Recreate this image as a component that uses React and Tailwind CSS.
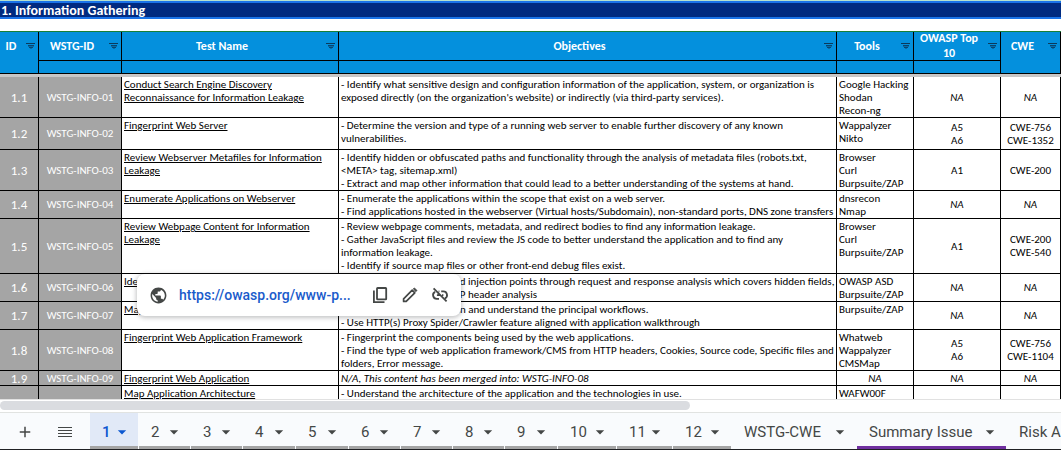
import { MdPublic, MdAdd, MdArrowDropDown } from "react-icons/md";

const columns = [
  { name: "ID", width: "w-[39px]", merged: true },
  { name: "WSTG-ID", width: "w-[83px]" },
  { name: "Test Name", width: "w-[217px]" },
  { name: "Objectives", width: "w-auto" },
  { name: "Tools", width: "w-[77px]" },
  { name: "OWASP Top 10", width: "w-[87px]" },
  { name: "CWE", width: "w-[60px]", merged: true },
];

const rows = [
  { id: "1.1", code: "WSTG-INFO-01", h: "h-[41px]", test: "Conduct Search Engine Discovery Reconnaissance for Information Leakage", goals: ["- Identify what sensitive design and configuration information of the application, system, or organization is", "exposed directly (on the organization's website) or indirectly (via third-party services)."], tools: ["Google Hacking", "Shodan", "Recon-ng"], top: ["NA"], cwe: ["NA"] },
  { id: "1.2", code: "WSTG-INFO-02", h: "h-8", test: "Fingerprint Web Server", goals: ["- Determine the version and type of a running web server to enable further discovery of any known", "vulnerabilities."], tools: ["Wappalyzer", "Nikto"], top: ["A5", "A6"], cwe: ["CWE-756", "CWE-1352"] },
  { id: "1.3", code: "WSTG-INFO-03", h: "h-[41px]", test: "Review Webserver Metafiles for Information Leakage", goals: ["- Identify hidden or obfuscated paths and functionality through the analysis of metadata files (robots.txt,", "<META> tag, sitemap.xml)", "- Extract and map other information that could lead to a better understanding of the systems at hand."], tools: ["Browser", "Curl", "Burpsuite/ZAP"], top: ["A1"], cwe: ["CWE-200"] },
  { id: "1.4", code: "WSTG-INFO-04", h: "h-7", test: "Enumerate Applications on Webserver", goals: ["- Enumerate the applications within the scope that exist on a web server.", "- Find applications hosted in the webserver (Virtual hosts/Subdomain), non-standard ports, DNS zone transfers"], tools: ["dnsrecon", "Nmap"], top: ["NA"], cwe: ["NA"] },
  { id: "1.5", code: "WSTG-INFO-05", h: "h-[55px]", test: "Review Webpage Content for Information Leakage", goals: ["- Review webpage comments, metadata, and redirect bodies to find any information leakage.", "- Gather JavaScript files and review the JS code to better understand the application and to find any", "information leakage.", "- Identify if source map files or other front-end debug files exist."], tools: ["Browser", "Curl", "Burpsuite/ZAP"], top: ["A1"], cwe: ["CWE-200", "CWE-540"] },
  { id: "1.6", code: "WSTG-INFO-06", h: "h-7", test: "Identify Application Entry Points", goals: ["- Identify possible entry and injection points through request and response analysis which covers hidden fields,", "parameters, methods, HTTP header analysis"], tools: ["OWASP ASD", "Burpsuite/ZAP"], top: ["NA"], cwe: ["NA"] },
  { id: "1.7", code: "WSTG-INFO-07", h: "h-7", test: "Map Execution Paths", goals: ["- Map the target application and understand the principal workflows.", "- Use HTTP(s) Proxy Spider/Crawler feature aligned with application walkthrough"], tools: ["Burpsuite/ZAP"], top: ["NA"], cwe: ["NA"] },
  { id: "1.8", code: "WSTG-INFO-08", h: "h-[41px]", test: "Fingerprint Web Application Framework", goals: ["- Fingerprint the components being used by the web applications.", "- Find the type of web application framework/CMS from HTTP headers, Cookies, Source code, Specific files and", "folders, Error message."], tools: ["Whatweb", "Wappalyzer", "CMSMap"], top: ["A5", "A6"], cwe: ["CWE-756", "CWE-1104"] },
  { id: "1.9", code: "WSTG-INFO-09", h: "h-[15px]", test: "Fingerprint Web Application", goals: ["N/A, This content has been merged into: WSTG-INFO-08"], italicGoals: true, tools: ["NA"], top: ["NA"], cwe: ["NA"] },
  { id: "", code: "", h: "h-[41px]", test: "Map Application Architecture", goals: ["- Understand the architecture of the application and the technologies in use."], tools: ["WAFW00F"], top: [], cwe: [] },
];

const tabs = [
  { name: "1", width: "w-[48px]", line: "border-[#a5a5a5]" },
  { name: "2", width: "w-[51px]", line: "border-[#a5a5a5]" },
  { name: "3", width: "w-[51px]", line: "border-[#a5a5a5]" },
  { name: "4", width: "w-[52px]", line: "border-[#a5a5a5]" },
  { name: "5", width: "w-[52px]", line: "border-[#a5a5a5]" },
  { name: "6", width: "w-[51px]", line: "border-[#a5a5a5]" },
  { name: "7", width: "w-[51px]", line: "border-[#a5a5a5]" },
  { name: "8", width: "w-[51px]", line: "border-[#a5a5a5]" },
  { name: "9", width: "w-[52px]", line: "border-[#a5a5a5]" },
  { name: "10", width: "w-[58px]", line: "border-[#a5a5a5]" },
  { name: "11", width: "w-[55px]", line: "border-[#a5a5a5]" },
  { name: "12", width: "w-[58px]", line: "border-[#a5a5a5]" },
  { name: "WSTG-CWE", width: "w-[124px]", line: "border-transparent" },
  { name: "Summary Issue", width: "w-[149px]", line: "border-[#7030a0]" },
  { name: "Risk Assessment", width: "w-[170px]", line: "border-transparent" },
];

function FilterIcon() {
  return (
    <svg className="h-[7px] w-[9px]" viewBox="0 0 9 7" fill="#0b3a5c" aria-hidden="true">
      <path d="M0 0h9v1H0z" />
      <path d="M2 2h6v1H2zM3 4h4v1H3z" fillOpacity="0.85" />
      <path d="M2 3h6v1H2zM4 5h2v1H4z" fillOpacity="0.4" />
    </svg>
  );
}

function CopyIcon() {
  return (
    <svg className="size-[18px]" viewBox="0 0 18 18" fill="none" stroke="currentColor" strokeWidth="1.8" aria-hidden="true">
      <rect x="6" y="2" width="9.2" height="11.4" rx="0.6" />
      <path d="M2.9 4.6v11.6h10.6" />
    </svg>
  );
}

function EditIcon() {
  return (
    <svg className="size-[18px]" viewBox="0 0 18 18" fill="none" stroke="currentColor" strokeWidth="1.7" strokeLinejoin="round" aria-hidden="true">
      <path d="M2.6 15.4v-2.6L11.2 4.2l2.6 2.6-8.6 8.6z" />
      <path d="M12.4 3l1-1 2.6 2.6-1 1z" fill="currentColor" strokeWidth="1" />
    </svg>
  );
}

function UnlinkIcon() {
  return (
    <svg className="size-[18px]" viewBox="0 0 18 18" fill="none" stroke="currentColor" strokeWidth="1.8" aria-hidden="true">
      <path d="M8 12.9H5.8a3.7 3.7 0 0 1-1.7-7M8.4 5.4H7.6M10.2 5.4h2a3.7 3.7 0 0 1 1.8 7M5.9 9.2h3M11 9.2h1.4M2.6 2.4l13 13" />
    </svg>
  );
}

function SheetsIcon() {
  return (
    <svg className="h-[10px] w-[14px]" viewBox="0 0 14 10" fill="currentColor" aria-hidden="true">
      <path d="M0 0h14v1H0zM0 3h14v1H0zM0 6h14v1H0zM0 9h14v1H0z" />
    </svg>
  );
}

function Lines({ items }) {
  return items.map((line) => (
    <div key={line} className={line === "NA" ? "text-center italic" : ""}>{line}</div>
  ));
}

function HeaderCell({ column }) {
  return (
    <th rowSpan={column.merged ? 2 : 1} className="h-[29px] border-r border-b border-black p-0 align-top">
      <div className="flex h-7 items-center">
        <span className="flex-1 pr-1 text-center">{column.name}</span>
        <button aria-label={`Filter ${column.name}`} className="mr-[3px] shrink-0"><FilterIcon /></button>
      </div>
    </th>
  );
}

function Row({ row }) {
  const cell = "border-r border-b border-black py-0";
  return (
    <tr className={row.h}>
      <td className={`${cell} bg-[#a5a5a5] px-0 text-center text-[13px] text-white`}>{row.id}</td>
      <td className={`${cell} bg-[#a5a5a5] px-0 text-center text-white`}>{row.code}</td>
      <td className={`${cell} px-[2px] pt-px align-top`}>
        <a href="https://owasp.org/" className="underline">{row.test}</a>
      </td>
      <td className={`${cell} px-[2px] pt-px align-top whitespace-nowrap ${row.italicGoals ? "italic" : ""}`}><Lines items={row.goals} /></td>
      <td className={`${cell} px-[2px] pt-px align-top whitespace-nowrap`}><Lines items={row.tools} /></td>
      <td className={`${cell} px-0 text-center`}><Lines items={row.top} /></td>
      <td className={`${cell} px-0 text-center`}><Lines items={row.cwe} /></td>
    </tr>
  );
}

function LinkCard() {
  return (
    <div className="absolute top-[274px] left-[137px] flex h-[42px] w-[324px] items-center rounded-lg bg-white pl-3 text-[#444746] shadow-[0_1px_4px_1px_rgba(60,64,67,0.3)]">
      <MdPublic size={19} />
      <a href="https://owasp.org/" className="ml-[11px] w-[184px] font-[Roboto,sans-serif] text-[14px] font-medium text-[#1a5bcb]">https://owasp.org/www-p...</a>
      <div className="ml-2 flex gap-3">
        <button aria-label="Copy link"><CopyIcon /></button>
        <button aria-label="Edit link"><EditIcon /></button>
        <button aria-label="Remove link"><UnlinkIcon /></button>
      </div>
    </div>
  );
}

export default function App() {
  return (
    <div className="relative flex h-screen flex-col overflow-hidden bg-white">
      <main className="min-h-0 flex-1 overflow-hidden font-[Carlito,Calibri,Lato,sans-serif] text-[11px] leading-[13px] text-black">
        <h1 className="h-[19px] overflow-hidden border-t border-[#b7e1cd]">
          <span className="flex h-[18px] items-center border-y-2 border-[#1a73e8] bg-[#002a80] pl-px text-[14px] font-bold text-white">1. Information Gathering</span>
        </h1>
        <table className="mt-3 w-full table-fixed border-separate border-spacing-0">
          <colgroup>{columns.map((c) => <col key={c.name} className={c.width} />)}</colgroup>
          <thead className="bg-[#0490dd] text-[12px] leading-[15px] font-bold text-white">
            <tr><td colSpan={7} className="h-px bg-[#188038] p-0"></td></tr>
            <tr>{columns.map((c) => <HeaderCell key={c.name} column={c} />)}</tr>
            <tr className="h-[13px]">{columns.filter((c) => !c.merged).map((c) => <td key={c.name} className="border-r border-b border-black p-0"></td>)}</tr>
          </thead>
          <tbody>
            <tr><td colSpan={7} className="h-[3px] bg-[#c7c7c7] p-0"></td></tr>
            {rows.map((row) => <Row key={row.test} row={row} />)}
          </tbody>
        </table>
      </main>
      <div className="h-[13px] shrink-0 border-t border-[#e1e1e1] bg-white pt-px">
        <div className="h-[9px] w-[65%] rounded-full bg-[#dadce0]"></div>
      </div>
      <nav className="flex h-[38px] shrink-0 gap-px border-t border-b border-t-[#e1e3e1] border-b-[#202124] bg-[#f9fbfd] font-[Roboto,sans-serif] text-[15px] text-[#444746]">
        <div className="flex w-[89px] shrink-0 items-center gap-6 pt-px pl-4">
          <button aria-label="Add sheet"><MdAdd size={18} /></button>
          <button aria-label="All sheets"><SheetsIcon /></button>
        </div>
        {tabs.map((tab, i) => (
          <button key={tab.name} className={`flex shrink-0 items-center justify-between border-b-[3px] pt-[5px] pr-[6px] pl-3 ${tab.width} ${tab.line} ${i === 0 ? "bg-[#e1e9f7] font-medium text-[#0b57d0]" : ""}`}>
            {tab.name}
            <MdArrowDropDown size={20} />
          </button>
        ))}
      </nav>
      <LinkCard />
    </div>
  );
}
